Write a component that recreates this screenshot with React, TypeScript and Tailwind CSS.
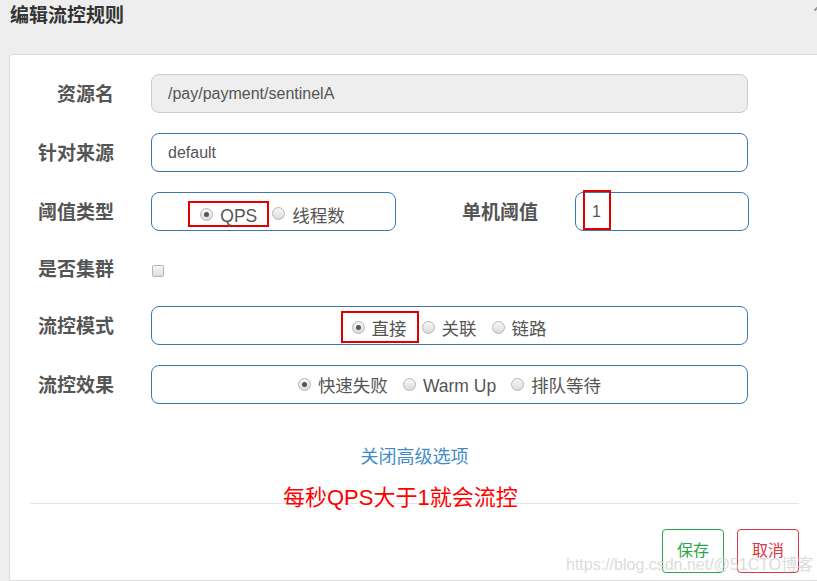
const FONT = { fontFamily: '"Liberation Sans", Arial, "Noto Sans CJK SC", sans-serif' };

function Radio({ checked }: { checked?: boolean }) {
  return (
    <span className="relative inline-flex w-[13px] h-[13px] shrink-0 items-center justify-center rounded-full border border-[#b5b5b5] bg-gradient-to-b from-[#f7f7f7] to-[#dcdcdc]">
      {checked && <span className="w-[5px] h-[5px] rounded-full bg-[#555]" />}
    </span>
  );
}

function Option({ label, checked }: { label: string; checked?: boolean }) {
  return (
    <span className="inline-flex items-center gap-[7px] text-[17.5px] text-[#555]">
      <Radio checked={checked} />
      <span className="translate-y-[2px]">{label}</span>
    </span>
  );
}

function Label({ children, w = "w-[104px]" }: { children: React.ReactNode; w?: string }) {
  return (
    <div className={`${w} shrink-0 translate-y-[2px] text-right text-[19px] font-bold text-[#555]`}>{children}</div>
  );
}

export default function App() {
  return (
    <div style={FONT} className="relative w-[817px] h-[581px] overflow-hidden bg-[#eeeeee]">
      <div className="h-[54px] pl-[10px] pt-[1px] text-[19px] font-bold text-[#333] leading-[30px]">编辑流控规则</div>
      <div className="absolute right-[-2px] top-[2px] w-[2px] h-[10px] rotate-45 bg-[#999]" />

      <div className="w-[811px] h-[527px] ml-[9px] bg-white border border-[#dcdcdc] rounded-tl-[4px] pt-[19px] px-[20px]">
        <div className="flex flex-col gap-[20px] -ml-[20px]">
          <div className="flex items-center h-[39px]">
            <Label>资源名</Label>
            <div className="ml-[37px] w-[597px] h-[39px] flex items-center px-[16px] rounded-[8px] border border-[#ccc] bg-[#eeeeee] text-[16px] text-[#555]">
              /pay/payment/sentinelA
            </div>
          </div>

          <div className="flex items-center h-[39px]">
            <Label>针对来源</Label>
            <div className="ml-[37px] w-[597px] h-[39px] flex items-center px-[16px] rounded-[8px] border border-[#3a78b5] text-[16px] text-[#555]">
              default
            </div>
          </div>

          <div className="flex items-center h-[39px]">
            <Label>阈值类型</Label>
            <div className="ml-[37px] w-[245px] h-[39px] flex items-center justify-center gap-[3px] pr-[14px] rounded-[8px] border border-[#3a78b5]">
              <span className="inline-flex items-center h-[26px] mt-[5px] px-[10px] border-2 border-[#e00000]">
                <Option label="QPS" checked />
              </span>
              <span className="mt-[5px]">
                <Option label="线程数" />
              </span>
            </div>
            <Label w="w-[142px]">单机阈值</Label>
            <div className="relative ml-[37px] w-[174px] h-[39px] flex items-center px-[16px] rounded-[8px] border border-[#3a78b5] text-[16px] text-[#555]">
              1
              <span className="absolute left-[7px] top-[-3px] w-[28px] h-[40px] border-2 border-[#e00000]" />
            </div>
          </div>

          <div className="flex items-center h-[35px]">
            <Label>是否集群</Label>
            <div className="ml-[38px] mt-[5px] w-[12px] h-[12px] rounded-[2px] border border-[#b5b5b5] bg-gradient-to-b from-[#f5f5f5] to-[#dedede]" />
          </div>

          <div className="flex items-center h-[39px]">
            <Label>流控模式</Label>
            <div className="ml-[37px] w-[597px] h-[39px] flex items-center justify-center gap-[15px] pr-[12px] pt-[3px] rounded-[8px] border border-[#3a78b5]">
              <span className="inline-flex items-center h-[32px] pl-[9px] pr-[10px] -mr-[12px] border-2 border-[#e00000]">
                <Option label="直接" checked />
              </span>
              <Option label="关联" />
              <Option label="链路" />
            </div>
          </div>

          <div className="flex items-center h-[39px]">
            <Label>流控效果</Label>
            <div className="ml-[37px] w-[597px] h-[39px] flex items-center justify-center gap-[15px] rounded-[8px] border border-[#3a78b5]">
              <Option label="快速失败" checked />
              <Option label="Warm Up" />
              <Option label="排队等待" />
            </div>
          </div>
        </div>

        <div className="mt-[41px] text-center text-[18px] text-[#428bca] leading-[24px]">关闭高级选项</div>

        <div className="relative mt-[34px] h-px bg-[#e5e5e5]">
          <div className="absolute left-[253px] top-[-18px] text-[22px] leading-[26px] text-[#ff0000]">每秒QPS大于1就会流控</div>
        </div>

        <div className="flex justify-end gap-[13px] mt-[25px]">
          <button className="w-[62px] h-[44px] rounded-[4px] border border-[#28a745] text-[16px] text-[#28a745]">保存</button>
          <button className="w-[62px] h-[44px] rounded-[4px] border border-[#dc3545] text-[16px] text-[#dc3545]">取消</button>
        </div>
      </div>

      <div className="absolute left-[566px] top-[553px] text-[16px] text-[#d4d4d4] opacity-80 whitespace-nowrap">https://blog.csdn.net/@51CTO博客</div>
    </div>
  );
}
